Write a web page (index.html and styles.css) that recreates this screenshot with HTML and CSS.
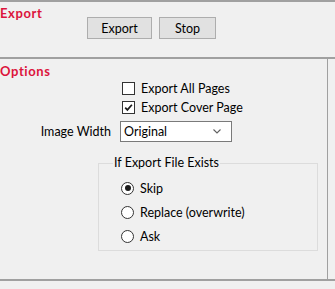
FILE: index.html
```html
<!DOCTYPE html>
<html lang="en">

<head>
  <meta charset="UTF-8">
  <meta name="viewport" content="width=device-width, initial-scale=1.0">
  <title>Export Settings</title>
  <link rel="stylesheet" href="styles.css">
</head>

<body>
  <div class="window">
    <section class="export-panel">
      <h2 class="heading">Export</h2>
      <div class="actions">
        <button class="btn btn-export">Export</button>
        <button class="btn btn-stop">Stop</button>
      </div>
    </section>

    <section class="options-row">
      <div class="options-panel">
        <h2 class="heading">Options</h2>

        <div class="checks">
          <label class="check"><span class="box"></span>Export All Pages</label>
          <label class="check">
            <span class="box">
              <svg width="11" height="11" viewBox="0 0 11 11"><path d="M2.2 5.6 L4.4 7.9 L8.9 2.8" fill="none" stroke="#1a1a1a" stroke-width="1.7"/></svg>
            </span>Export Cover Page
          </label>
        </div>

        <div class="field">
          <span class="field-label">Image Width</span>
          <div class="select">
            <span>Original</span>
            <svg class="chevron" width="8" height="5" viewBox="0 0 8 5"><path d="M0.5 0.5 L4 4 L7.5 0.5" fill="none" stroke="#606060" stroke-width="1.1"/></svg>
          </div>
        </div>

        <fieldset class="group">
          <legend>If Export File Exists</legend>
          <label class="radio"><span class="dot checked"></span>Skip</label>
          <label class="radio"><span class="dot"></span>Replace (overwrite)</label>
          <label class="radio"><span class="dot"></span>Ask</label>
        </fieldset>
      </div>
    </section>
  </div>
</body>

</html>
```

FILE: styles.css
```css
body {
  margin: 0;
  padding: 0;
  background-color: #f0f0f0;
  font-family: Lato, "Liberation Sans", sans-serif;
  font-size: 12.5px;
  color: #000;
}

.window {
  border-top: 2px solid #a0a0a0;
}

.heading {
  margin: 0;
  font-size: 13px;
  line-height: 15px;
  font-weight: bold;
  letter-spacing: 0.6px;
  color: #dc143c;
}

/* export block */
.export-panel {
  display: flex;
  align-items: flex-start;
  height: 57px;
  padding-top: 4px;
  box-sizing: border-box;
  border-bottom: 2px solid #a0a0a0;
}

.export-panel .heading {
  flex: 0 0 87px;
}

.actions {
  display: flex;
  gap: 7px;
  margin-top: 11px;
}

.btn {
  height: 22px;
  padding: 0;
  border: 1px solid #adadad;
  background-color: #e1e1e1;
  font-family: inherit;
  font-size: 12.5px;
  color: #000;
}

.btn-export {
  width: 65px;
}

.btn-stop {
  width: 57px;
}

/* options block */
.options-row {
  border-bottom: 2px solid #a0a0a0;
}

.options-panel {
  width: 328px;
  height: 220px;
  box-sizing: border-box;
  padding-top: 5px;
  border-right: 1px solid #a0a0a0;
}

.checks {
  display: flex;
  flex-direction: column;
  padding-left: 122px;
}

.check {
  display: flex;
  align-items: center;
  gap: 6px;
  height: 19px;
}

.box {
  display: flex;
  align-items: center;
  justify-content: center;
  width: 13px;
  height: 13px;
  box-sizing: border-box;
  border: 1px solid #333;
  background: #fff;
}

.field {
  display: flex;
  align-items: center;
  margin-top: 4px;
}

.field-label {
  width: 111px;
  text-align: right;
  padding-right: 9px;
}

.select {
  display: flex;
  align-items: center;
  justify-content: space-between;
  width: 112px;
  height: 21px;
  box-sizing: border-box;
  padding: 0 10px 0 3px;
  border: 1px solid #7a7a7a;
  background: #fff;
}

.group {
  width: 220px;
  box-sizing: border-box;
  margin: 13px 0 0 98px;
  padding: 5px 0 2px 14px;
  border: 1px solid #dcdcdc;
}

.group legend {
  padding: 0 1px;
  line-height: 16px;
}

.radio {
  display: flex;
  align-items: center;
  gap: 6px;
  height: 24px;
  margin-left: 8px;
}

.dot {
  display: flex;
  align-items: center;
  justify-content: center;
  width: 13px;
  height: 13px;
  box-sizing: border-box;
  border: 1px solid #333;
  border-radius: 50%;
  background: #fff;
}

.dot.checked::after {
  content: "";
  width: 6px;
  height: 6px;
  border-radius: 50%;
  background: #1a1a1a;
}
```
